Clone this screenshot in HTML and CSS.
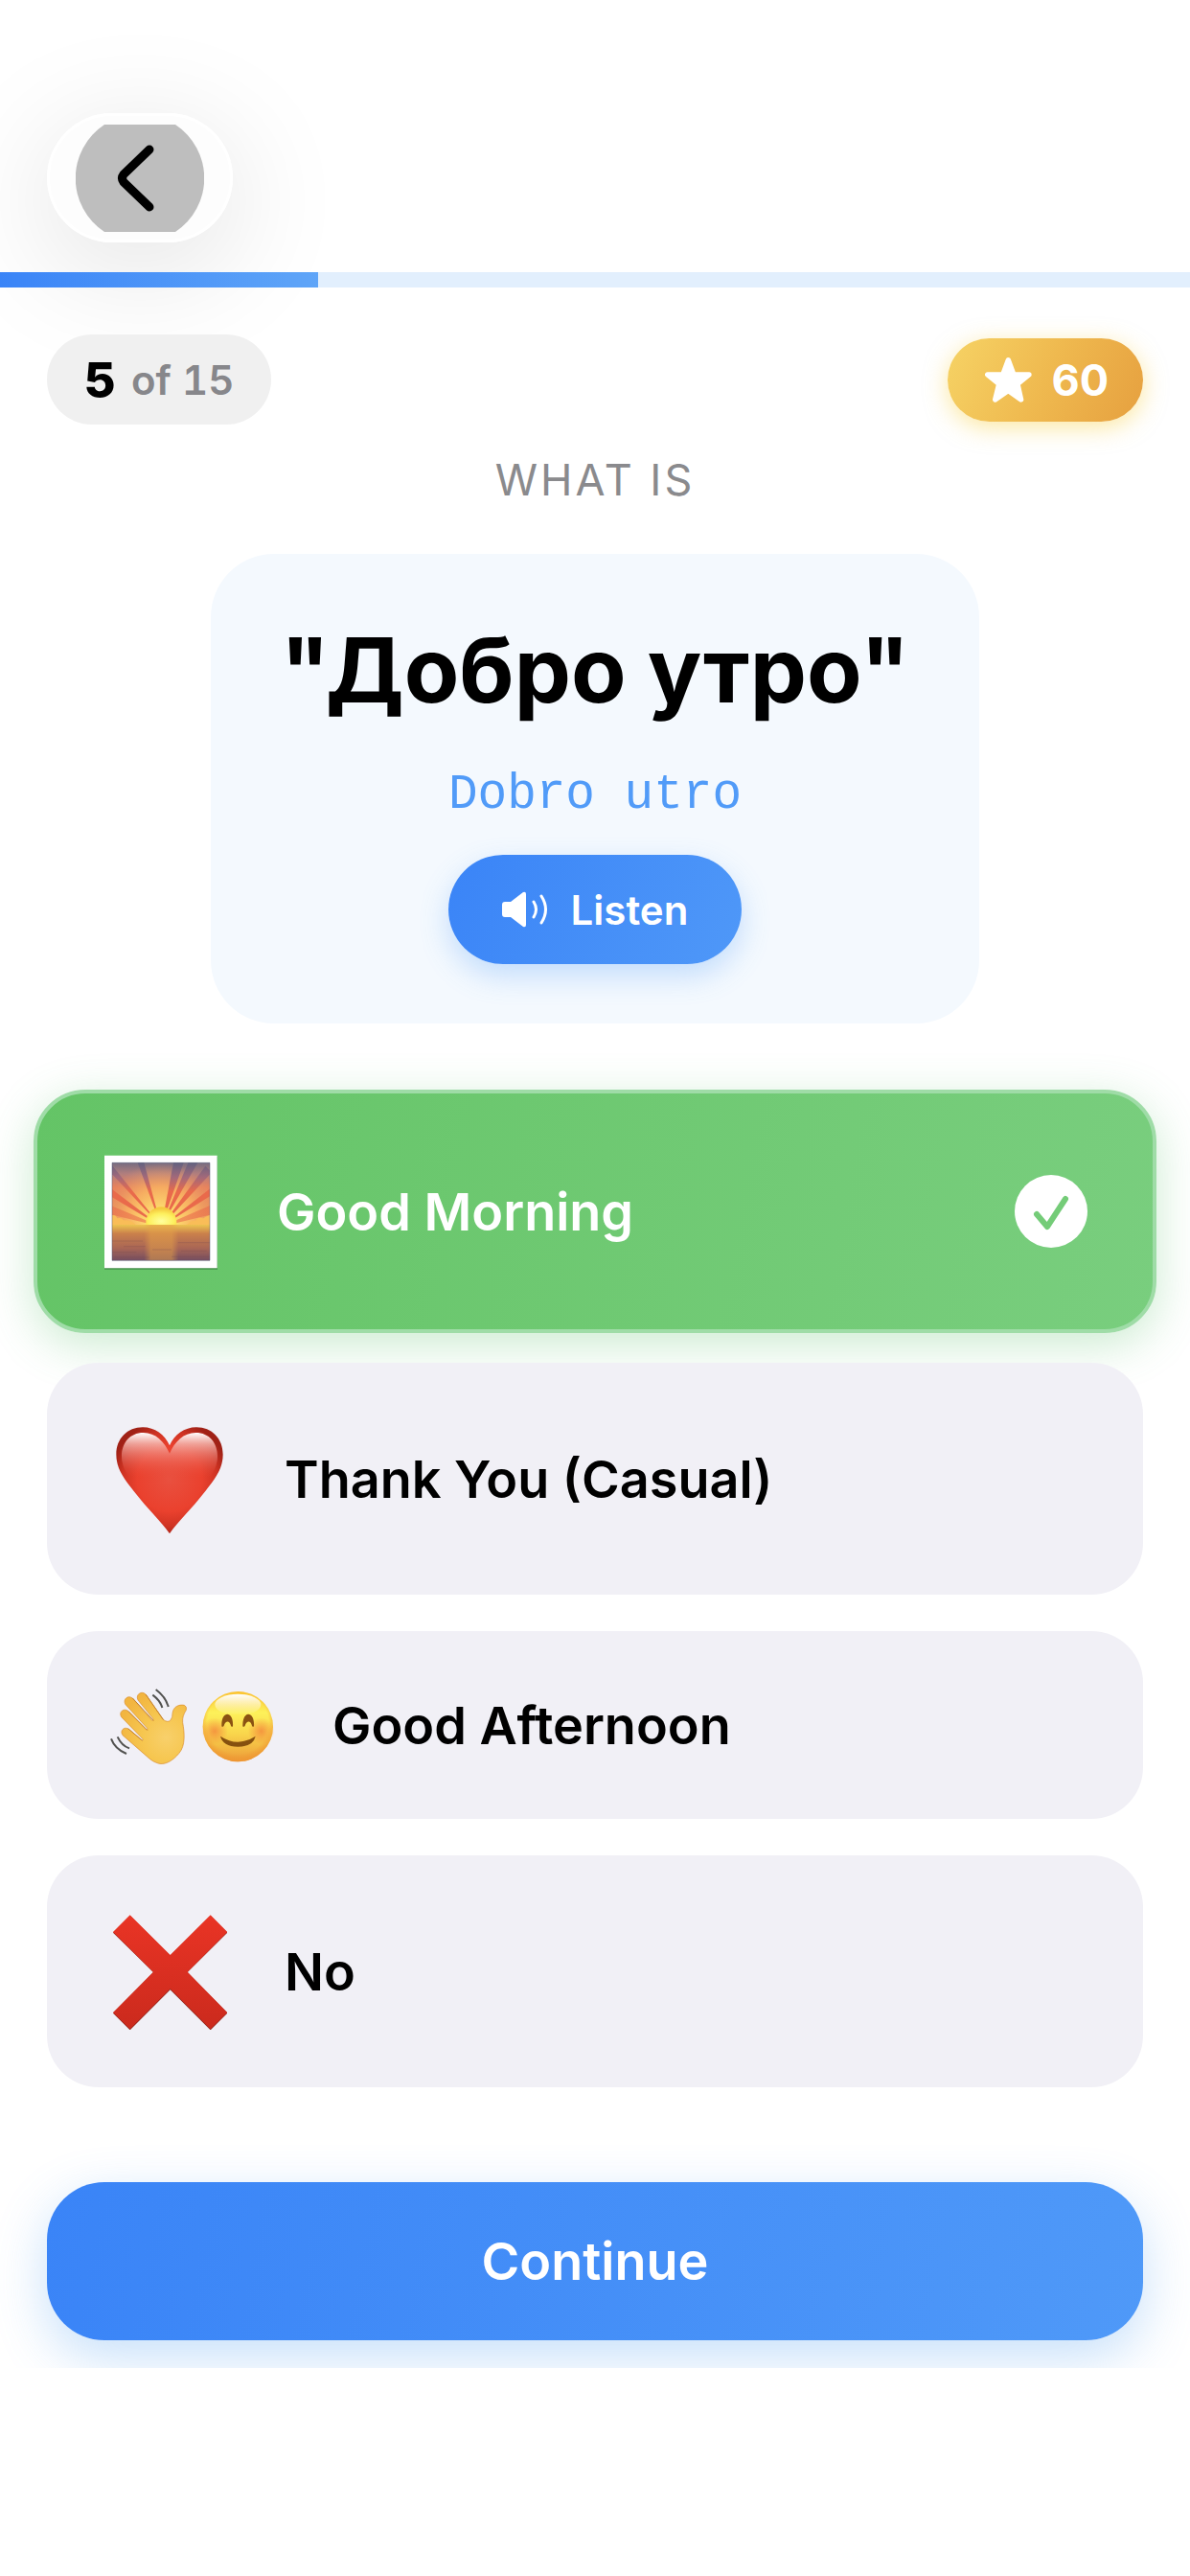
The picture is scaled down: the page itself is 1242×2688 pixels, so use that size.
FILE: index.html
```html
<!DOCTYPE html>
<html lang="en">
<head>
    <meta charset="UTF-8">
    <meta name="viewport" content="width=device-width, initial-scale=1.0">
    <title>Language Quiz</title>
    <link rel="stylesheet" href="styles.css">
</head>
<body>
    <header>
        <button class="back-button" aria-label="Back">
            <svg class="back-icon" viewBox="0 0 134 112">
                <path d="M30 0H104A67 67 0 0 1 104 112H30A67 67 0 0 1 30 0Z" fill="#bebebe"/>
                <path d="M77 26L50 52Q47 56 50 60L77 86" fill="none" stroke="#000" stroke-width="9" stroke-linecap="round" stroke-linejoin="round"/>
            </svg>
        </button>
    </header>

    <!-- Progress -->
    <div class="progress">
        <div class="progress-fill" style="width: 26.7%"></div>
    </div>

    <main>
        <div class="status">
            <div class="counter"><strong>5</strong> <span>of 15</span></div>
            <div class="score">
                <svg class="star-icon" viewBox="382 334 147 147">
                    <path d="M455 345L472 391H520L484 420L495 469L455 441L414 469L426 420L390 391H438Z" fill="#fff" stroke="#fff" stroke-width="16" stroke-linejoin="round"/>
                </svg>
                <span>60</span>
            </div>
        </div>

        <!-- Question -->
        <p class="prompt">WHAT IS</p>
        <section class="card">
            <h1>"Добро утро"</h1>
            <p class="latin">Dobro utro</p>
            <button class="listen-button">
                <svg class="speaker-icon" viewBox="0 0 48 40">
                    <path d="M3 12H9L22 2Q25 1 25 4V36Q25 39 22 38L9 28H3Q0 28 0 25V15Q0 12 3 12Z" fill="#fff"/>
                    <path d="M33 12Q38 20 33 28M41 6Q50 20 41 34" fill="none" stroke="#fff" stroke-width="3" stroke-linecap="round"/>
                </svg>
                <span>Listen</span>
            </button>
        </section>

        <!-- Answers -->
        <div class="answers">
            <button class="answer tall correct">
                <svg class="picture" viewBox="54 69 366 366">
                    <defs>
                        <linearGradient id="sky" x1="0" y1="0" x2="0" y2="1">
                            <stop offset="0" stop-color="#5d6485"/>
                            <stop offset="0.18" stop-color="#a87b80"/>
                            <stop offset="0.4" stop-color="#ee7f56"/>
                            <stop offset="1" stop-color="#f09a4c"/>
                        </linearGradient>
                        <radialGradient id="glow" gradientUnits="userSpaceOnUse" cx="238" cy="290" r="190">
                            <stop offset="0.2" stop-color="#fee070"/>
                            <stop offset="0.6" stop-color="#f7b062" stop-opacity="0.9"/>
                            <stop offset="1" stop-color="#d98c70" stop-opacity="0.2"/>
                        </radialGradient>
                        <radialGradient id="sun" cx="0.5" cy="0.8" r="0.7">
                            <stop offset="0" stop-color="#ffff9e"/>
                            <stop offset="0.6" stop-color="#fdf05e"/>
                            <stop offset="1" stop-color="#f5c93e"/>
                        </radialGradient>
                        <linearGradient id="sea" x1="0" y1="0" x2="0" y2="1">
                            <stop offset="0" stop-color="#ecc350"/>
                            <stop offset="0.25" stop-color="#ca804b"/>
                            <stop offset="0.65" stop-color="#a96655"/>
                            <stop offset="1" stop-color="#754e60"/>
                        </linearGradient>
                        <linearGradient id="reflection" x1="0" y1="0" x2="1" y2="0">
                            <stop offset="0" stop-color="#e6a348" stop-opacity="0"/>
                            <stop offset="0.2" stop-color="#e6a348" stop-opacity="0.5"/>
                            <stop offset="0.8" stop-color="#e6a348" stop-opacity="0.5"/>
                            <stop offset="1" stop-color="#e6a348" stop-opacity="0"/>
                        </linearGradient>
                        <linearGradient id="ray" gradientUnits="userSpaceOnUse" x1="0" y1="100" x2="0" y2="190">
                            <stop offset="0" stop-color="#626180"/>
                            <stop offset="0.5" stop-color="#a2697a"/>
                            <stop offset="1" stop-color="#e96a4b"/>
                        </linearGradient>
                        <clipPath id="frame"><path d="M84 100H390V294H84Z"/></clipPath>
                    </defs>
                    <path d="M60 80H414V434H60Z" fill="#458f4a"/>
                    <path d="M60 77H413V430H60Z" fill="#fff"/>
                    <path d="M84 100H390V294H84Z" fill="url(#sky)"/>
                    <path d="M84 100H390V294H84Z" fill="url(#glow)"/>
                    <g clip-path="url(#frame)" fill="url(#ray)">
                        <path d="M238 300L164 100H184Z"/>
                        <path d="M238 300L276 100H308Z"/>
                        <path d="M238 300L322 100H352Z"/>
                        <path d="M238 300L376 110L396 130Z"/>
                        <path d="M238 300L84 108V136Z"/>
                        <path d="M238 300L80 180V205Z"/>
                        <path d="M238 300L394 178V202Z"/>
                        <path d="M238 300L80 234V262Z" opacity="0.6"/>
                        <path d="M238 300L394 232V262Z" opacity="0.6"/>
                    </g>
                    <path d="M84 264Q96 262 100 274Q112 270 120 280Q150 280 158 294H84ZM390 264Q376 268 370 274Q350 268 346 281Q330 280 318 294H390Z" fill="#f9bd58"/>
                    <path d="M190 294V286A48 48 0 0 1 286 286V294Z" fill="url(#sun)"/>
                    <path d="M84 294H390V406H84Z" fill="url(#sea)"/>
                    <path d="M184 294H292V406H184Z" fill="url(#reflection)"/>
                    <path d="M84 345H180M120 362H188M290 350H390M84 380H160M300 376H380M210 372H270M90 396H200M270 394H390" stroke="#7c4c50" stroke-width="3" opacity="0.3"/>
                    <path d="M84 100H390V406H84Z" fill="none" stroke="#4f5674" stroke-width="2" opacity="0.7"/>
                </svg>
                <span>Good Morning</span>
                <svg class="check-icon" viewBox="0 0 76 76">
                    <circle cx="38" cy="38" r="38" fill="#fff"/>
                    <path d="M23 41L34 54L53 25" fill="none" stroke="#74cc78" stroke-width="6" stroke-linecap="round" stroke-linejoin="round"/>
                </svg>
            </button>

            <button class="answer tall">
                <svg class="picture" viewBox="30 21 366 366">
                    <defs>
                        <radialGradient id="heart" gradientUnits="userSpaceOnUse" cx="216" cy="205" r="185">
                            <stop offset="0" stop-color="#e9503f"/>
                            <stop offset="0.55" stop-color="#ea412e"/>
                            <stop offset="0.8" stop-color="#cf3323"/>
                            <stop offset="1" stop-color="#a02116"/>
                        </radialGradient>
                        <linearGradient id="shine" x1="0" y1="0" x2="0" y2="1">
                            <stop offset="0" stop-color="#fff"/>
                            <stop offset="0.25" stop-color="#f5b5ad" stop-opacity="0.85"/>
                            <stop offset="1" stop-color="#ea503f" stop-opacity="0"/>
                        </linearGradient>
                    </defs>
                    <path d="M216 376C190 338 148 300 104 243C70 200 49 170 49 128C49 78 84 43 132 43C170 43 201 66 216 100C231 66 262 43 300 43C348 43 383 78 383 128C383 170 362 200 328 243C284 300 242 338 216 376Z" fill="url(#heart)"/>
                    <path d="M216 125C200 88 172 60 134 60C92 60 66 92 66 134C66 160 76 180 90 200H342C356 180 366 160 366 134C366 92 340 60 298 60C260 60 232 88 216 125Z" fill="url(#shine)"/>
                </svg>
                <span>Thank You (Casual)</span>
            </button>

            <button class="answer">
                <svg class="picture-pair" viewBox="30 0 516 315">
                    <defs>
                        <radialGradient id="hand" gradientUnits="userSpaceOnUse" cx="205" cy="195" r="150">
                            <stop offset="0" stop-color="#f8d06b"/>
                            <stop offset="0.5" stop-color="#f6c64f"/>
                            <stop offset="1" stop-color="#f2b540"/>
                        </radialGradient>
                        <linearGradient id="face" x1="0" y1="0" x2="0" y2="1">
                            <stop offset="0" stop-color="#fbc22f"/>
                            <stop offset="0.3" stop-color="#fdf15a"/>
                            <stop offset="0.6" stop-color="#f9d64c"/>
                            <stop offset="1" stop-color="#ec9a38"/>
                        </linearGradient>
                        <radialGradient id="rim" cx="0.5" cy="0.45" r="0.56">
                            <stop offset="0.78" stop-color="#ef9430" stop-opacity="0"/>
                            <stop offset="1" stop-color="#ef9430" stop-opacity="0.85"/>
                        </radialGradient>
                        <radialGradient id="blush">
                            <stop offset="0" stop-color="#f3803a" stop-opacity="0.75"/>
                            <stop offset="1" stop-color="#f3803a" stop-opacity="0"/>
                        </radialGradient>
                        <linearGradient id="top-shine" x1="0" y1="0" x2="0" y2="1">
                            <stop offset="0" stop-color="#fff"/>
                            <stop offset="1" stop-color="#fff" stop-opacity="0"/>
                        </linearGradient>
                    </defs>
                    <path d="M155 263L69 188C59 174 73 160 87 168L128 203Q132 206 133 201L65 131C55 115 73 101 87 113L143 171Q148 171 146 166L78 92C68 76 86 60 101 73L161 142Q167 142 164 136L117 78C108 61 129 46 142 61L196 139Q210 150 219 141Q226 132 225 119C228 98 245 91 262 94Q271 98 268 109C259 124 256 133 257 148C263 181 266 221 246 244C229 265 204 283 180 276Q166 272 155 263Z" fill="url(#hand)" stroke="#d98d2d" stroke-width="2"/>
                    <path d="M87 168L130 204M87 113L146 172M101 73L165 142M142 61L196 139" fill="none" stroke="#c5832d" stroke-width="3" stroke-linecap="round"/>
                    <path d="M173 45Q204 68 212 99M163 62Q187 80 193 102M33 199Q45 231 81 246M53 193Q66 221 90 229" fill="none" stroke="#51514f" stroke-width="6"/>
                    <circle cx="430" cy="161" r="110" fill="url(#face)"/>
                    <circle cx="430" cy="161" r="110" fill="url(#rim)"/>
                    <ellipse cx="430" cy="92" rx="72" ry="33" fill="url(#top-shine)"/>
                    <circle cx="357" cy="175" r="42" fill="url(#blush)"/>
                    <circle cx="503" cy="175" r="42" fill="url(#blush)"/>
                    <path d="M379 160C377 108 418 112 414 160Q411 164 408 158C404 142 392 140 386 158Q382 164 379 160ZM445 160C443 108 484 112 480 160Q477 164 474 158C470 142 458 140 452 158Q448 164 445 160Z" fill="#8a5212"/>
                    <path d="M375 191Q430 227 485 191Q478 223 430 224Q382 223 375 191Z" fill="#86500f"/>
                </svg>
                <span>Good Afternoon</span>
            </button>

            <button class="answer tall">
                <svg class="picture" viewBox="225 225 366 366">
                    <defs>
                        <linearGradient id="cross" x1="0" y1="0" x2="0" y2="1">
                            <stop offset="0" stop-color="#e93425"/>
                            <stop offset="1" stop-color="#cb2a1d"/>
                        </linearGradient>
                    </defs>
                    <path d="M234 287L287 234L413 359L539 234L592 287L467 411L592 539L539 592L413 466L287 592L234 539L360 411Z" fill="#8f2017"/>
                    <path d="M234 285L287 232L413 357L539 232L592 285L467 410L592 537L539 589L413 463L287 589L234 537L360 410Z" fill="url(#cross)"/>
                </svg>
                <span>No</span>
            </button>
        </div>
    </main>

    <footer>
        <button class="continue-button">Continue</button>
    </footer>
</body>
</html>
```

FILE: styles.css
```css
* {
    box-sizing: border-box;
}

body {
    margin: 0;
    background-color: #fff;
    color: #000;
    font-family: Inter, "Liberation Sans", sans-serif;
}

h1, p {
    margin: 0;
}

button {
    border: none;
    color: inherit;
    font-family: inherit;
    cursor: pointer;
}

svg {
    display: block;
    flex: none;
}

header {
    padding: 118px 49px 31px;
}

.back-button {
    display: block;
    padding: 12px 30px 11px;
    border-radius: 68px;
    background-color: #fdfdfd;
    box-shadow: inset 0 0 0 3px #fff, 0 24px 120px 8px rgba(0, 0, 0, 0.1);
}

.back-icon {
    width: 134px;
    height: 112px;
}

.progress {
    position: relative;
    height: 16px;
    background-color: #e2effd;
}

.progress-fill {
    height: 100%;
    background: linear-gradient(90deg, #3a84f7, #5fa5f8);
}

main {
    padding: 49px 49px 0;
}

.status {
    display: flex;
    justify-content: space-between;
    align-items: center;
}

.counter {
    display: flex;
    align-items: center;
    gap: 16px;
    height: 94px;
    padding: 0 39px;
    border-radius: 47px;
    background-color: #f0f0f0;
    font-variant-numeric: tabular-nums;
}

.counter strong {
    font-size: 51px;
    font-weight: 800;
}

.counter span {
    color: #87878b;
    font-size: 42px;
    font-weight: 600;
}

.score {
    display: flex;
    align-items: center;
    gap: 20px;
    height: 87px;
    padding: 0 36px 0 39px;
    border-radius: 44px;
    background: linear-gradient(115deg, #f6d365, #efb94f 50%, #e6a03f);
    box-shadow: 0 6px 24px rgba(250, 210, 70, 0.5);
    color: #fff;
    font-size: 45px;
    font-weight: 700;
}

.star-icon {
    width: 49px;
    height: 49px;
}

.prompt {
    margin: 30px 0 50px;
    color: #8a8a8d;
    font-size: 45px;
    line-height: 55px;
    letter-spacing: 3px;
    text-align: center;
}

.card {
    display: flex;
    flex-direction: column;
    align-items: center;
    width: fit-content;
    margin: 0 auto;
    padding: 60px 72px 62px;
    border-radius: 66px;
    background-color: #f4f9fe;
}

.card h1 {
    font-size: 94px;
    font-weight: 700;
    line-height: 122px;
}

.latin {
    margin: 40px 0 32px;
    color: #519bf8;
    font-family: "Liberation Mono", monospace;
    font-size: 51px;
    line-height: 60px;
}

.listen-button {
    display: flex;
    align-items: center;
    gap: 24px;
    height: 114px;
    padding: 0 56px;
    border-radius: 57px;
    background: linear-gradient(115deg, #3a84f7, #4f98f8);
    box-shadow: 0 12px 30px rgba(80, 155, 248, 0.3);
    color: #fff;
    font-size: 42px;
    font-weight: 600;
}

.speaker-icon {
    width: 48px;
    height: 40px;
}

.answers {
    display: flex;
    flex-direction: column;
    gap: 38px;
    margin-top: 76px;
}

.answer {
    display: flex;
    align-items: center;
    gap: 60px;
    min-height: 196px;
    padding: 0 66px;
    border-radius: 54px;
    background-color: #f1f0f6;
    font-size: 54px;
    font-weight: 600;
    text-align: left;
}

.answer.tall {
    min-height: 242px;
}

.answer.correct {
    min-height: 254px;
    margin: -7px -14px;
    padding: 0 68px;
    border: 4px solid #9fdca7;
    background: linear-gradient(100deg, #64c466, #79ce7e) border-box;
    box-shadow: 0 12px 48px rgba(82, 190, 100, 0.3);
    color: #fff;
}

.picture {
    width: 122px;
    height: 122px;
}

.picture-pair {
    width: 172px;
    height: 105px;
}

.check-icon {
    width: 76px;
    height: 76px;
    margin-left: auto;
}

/* The button's shadow ends where the footer does */
footer {
    overflow: hidden;
    margin-top: 37px;
    padding: 62px 49px 29px;
}

.continue-button {
    width: 100%;
    height: 165px;
    border-radius: 60px;
    background: linear-gradient(100deg, #3a84f7, #4f99f8);
    box-shadow: 0 18px 54px rgba(80, 160, 240, 0.32);
    color: #fff;
    font-size: 54px;
    font-weight: 600;
}
```
